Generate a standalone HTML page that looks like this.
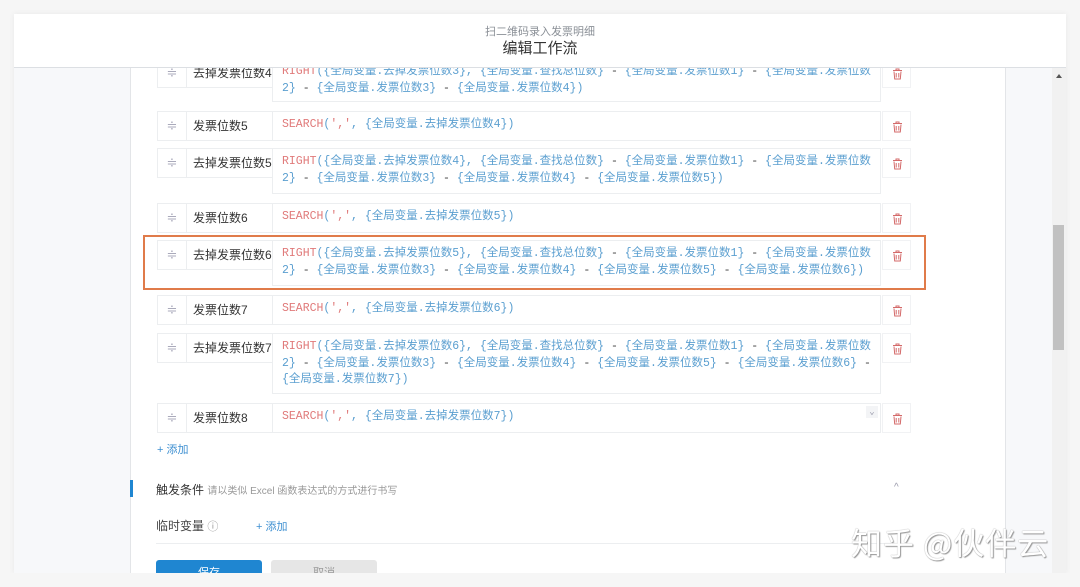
<!DOCTYPE html>
<html><head><meta charset="utf-8"><style>
*{box-sizing:border-box;margin:0;padding:0}
html,body{width:1080px;height:587px;overflow:hidden}
body{background:#f6f6f6;font-family:"Liberation Sans","Noto Sans CJK SC",sans-serif;position:relative}
.modal{position:absolute;left:14px;top:14px;width:1052px;height:559px;background:#f7f8fa;overflow:hidden;box-shadow:0 0 6px rgba(0,0,0,.06)}
.hdr{position:absolute;left:0;top:0;width:1052px;height:54px;background:#fff;border-bottom:1px solid #dcdfe3;text-align:center;z-index:3}
.hdr .s{font-size:11px;color:#8a8f96;margin-top:11px;line-height:14px}
.hdr .t{font-size:15px;color:#333;line-height:20px}
.card{position:absolute;left:116px;top:40px;width:876px;height:519px;background:#fff;border-left:1px solid #e3e5e8;border-right:1px solid #e3e5e8}
.sb{position:absolute;left:1038px;top:54px;width:14px;height:505px;background:#f1f1f1}
.thumb{position:absolute;left:1px;top:157px;width:11px;height:125px;background:#c1c1c1}
.arr{position:absolute;left:4px;top:6px;width:0;height:0;border-left:3px solid transparent;border-right:3px solid transparent;border-bottom:4px solid #555}
.row{position:absolute;left:143px}
.h{position:absolute;left:0;top:0;width:30px;height:30px;border:1px solid #eceef0;color:#aab;font-size:13px;text-align:center;line-height:28px}
.n{position:absolute;left:29px;top:0;width:87px;height:30px;border:1px solid #eceef0;border-left:none;font-size:12px;color:#333;line-height:28px;padding-left:7px;white-space:nowrap;overflow:hidden}
.f{position:absolute;left:115px;top:0;width:609px;border:1px solid #eceef0;font-family:"Liberation Mono","Noto Sans CJK SC",monospace;font-size:11.5px;line-height:16.5px;padding:5px 9px 6px;color:#5b9fd0;white-space:nowrap;overflow:hidden;min-height:30px}
.f b{font-weight:normal;color:#e07a7a}
.f i{font-style:normal;color:#444}
.d{position:absolute;left:725px;top:0;width:29px;height:30px;border:1px solid #f1f2f4}
.d svg{position:absolute;left:9px;top:9px}
.hl{position:absolute;left:129px;top:221px;width:783px;height:55px;border:2.5px solid #e07b4a;z-index:2}
</style></head><body>
<div class="modal">
<div class="hdr"><div class="s">扫二维码录入发票明细</div><div class="t">编辑工作流</div></div>
<div class="card"></div>
<div class="sb"><div class="arr"></div><div class="thumb"></div></div>

<div class="row" style="top:44px"><div class="h">≑</div><div class="n">去掉发票位数4</div><div class="f" style="height:44px"><b>RIGHT</b>({全局变量.去掉发票位数3}, {全局变量.查找总位数} <i>-</i> {全局变量.发票位数1} <i>-</i> {全局变量.发票位数<br>2} <i>-</i> {全局变量.发票位数3} <i>-</i> {全局变量.发票位数4})</div><div class="d"><svg width="11" height="12"><path d="M1 2.5h9M4 2.5V1h3v1.5M2 3.5l.7 7.5h5.6L9 3.5M4.2 5v4.5M6.8 5v4.5" stroke="#d46a6a" fill="none" stroke-width="1"/></svg></div></div>

<div class="row" style="top:97px"><div class="h">≑</div><div class="n">发票位数5</div><div class="f"><b>SEARCH</b>(<b>','</b>, {全局变量.去掉发票位数4})</div><div class="d"><svg width="11" height="12"><path d="M1 2.5h9M4 2.5V1h3v1.5M2 3.5l.7 7.5h5.6L9 3.5M4.2 5v4.5M6.8 5v4.5" stroke="#d46a6a" fill="none" stroke-width="1"/></svg></div></div>

<div class="row" style="top:134px"><div class="h">≑</div><div class="n">去掉发票位数5</div><div class="f" style="height:46px"><b>RIGHT</b>({全局变量.去掉发票位数4}, {全局变量.查找总位数} <i>-</i> {全局变量.发票位数1} <i>-</i> {全局变量.发票位数<br>2} <i>-</i> {全局变量.发票位数3} <i>-</i> {全局变量.发票位数4} <i>-</i> {全局变量.发票位数5})</div><div class="d"><svg width="11" height="12"><path d="M1 2.5h9M4 2.5V1h3v1.5M2 3.5l.7 7.5h5.6L9 3.5M4.2 5v4.5M6.8 5v4.5" stroke="#d46a6a" fill="none" stroke-width="1"/></svg></div></div>

<div class="row" style="top:189px"><div class="h">≑</div><div class="n">发票位数6</div><div class="f"><b>SEARCH</b>(<b>','</b>, {全局变量.去掉发票位数5})</div><div class="d"><svg width="11" height="12"><path d="M1 2.5h9M4 2.5V1h3v1.5M2 3.5l.7 7.5h5.6L9 3.5M4.2 5v4.5M6.8 5v4.5" stroke="#d46a6a" fill="none" stroke-width="1"/></svg></div></div>

<div class="row" style="top:226px"><div class="h">≑</div><div class="n">去掉发票位数6</div><div class="f" style="height:46px"><b>RIGHT</b>({全局变量.去掉发票位数5}, {全局变量.查找总位数} <i>-</i> {全局变量.发票位数1} <i>-</i> {全局变量.发票位数<br>2} <i>-</i> {全局变量.发票位数3} <i>-</i> {全局变量.发票位数4} <i>-</i> {全局变量.发票位数5} <i>-</i> {全局变量.发票位数6})</div><div class="d"><svg width="11" height="12"><path d="M1 2.5h9M4 2.5V1h3v1.5M2 3.5l.7 7.5h5.6L9 3.5M4.2 5v4.5M6.8 5v4.5" stroke="#d46a6a" fill="none" stroke-width="1"/></svg></div></div>
<div class="hl"></div>

<div class="row" style="top:281px"><div class="h">≑</div><div class="n">发票位数7</div><div class="f"><b>SEARCH</b>(<b>','</b>, {全局变量.去掉发票位数6})</div><div class="d"><svg width="11" height="12"><path d="M1 2.5h9M4 2.5V1h3v1.5M2 3.5l.7 7.5h5.6L9 3.5M4.2 5v4.5M6.8 5v4.5" stroke="#d46a6a" fill="none" stroke-width="1"/></svg></div></div>

<div class="row" style="top:319px"><div class="h">≑</div><div class="n">去掉发票位数7</div><div class="f" style="height:61px"><b>RIGHT</b>({全局变量.去掉发票位数6}, {全局变量.查找总位数} <i>-</i> {全局变量.发票位数1} <i>-</i> {全局变量.发票位数<br>2} <i>-</i> {全局变量.发票位数3} <i>-</i> {全局变量.发票位数4} <i>-</i> {全局变量.发票位数5} <i>-</i> {全局变量.发票位数6} <i>-</i><br>{全局变量.发票位数7})</div><div class="d"><svg width="11" height="12"><path d="M1 2.5h9M4 2.5V1h3v1.5M2 3.5l.7 7.5h5.6L9 3.5M4.2 5v4.5M6.8 5v4.5" stroke="#d46a6a" fill="none" stroke-width="1"/></svg></div></div>

<div class="row" style="top:389px"><div class="h">≑</div><div class="n">发票位数8</div><div class="f"><b>SEARCH</b>(<b>','</b>, {全局变量.去掉发票位数7})<span style="position:absolute;right:2px;top:2px;width:12px;height:12px;background:#f3f4f6;color:#99a;font-size:9px;line-height:12px;text-align:center">⌄</span></div><div class="d"><svg width="11" height="12"><path d="M1 2.5h9M4 2.5V1h3v1.5M2 3.5l.7 7.5h5.6L9 3.5M4.2 5v4.5M6.8 5v4.5" stroke="#d46a6a" fill="none" stroke-width="1"/></svg></div></div>

<div style="position:absolute;left:143px;top:427px;font-size:11px;color:#3d8fd1">+ 添加</div>
<div style="position:absolute;left:116px;top:466px;width:3px;height:17px;background:#1f86d1"></div>
<div style="position:absolute;left:142px;top:467px;font-size:12px;color:#333;white-space:nowrap">触发条件 <span style="font-size:10px;color:#999">请以类似 Excel 函数表达式的方式进行书写</span></div>
<div style="position:absolute;left:880px;top:468px;font-size:10px;color:#99a">^</div>
<div style="position:absolute;left:142px;top:503px;font-size:12px;color:#444">临时变量 <span style="color:#999;font-size:11px">ⓘ</span></div>
<div style="position:absolute;left:242px;top:504px;font-size:11px;color:#3d8fd1">+ 添加</div>
<div style="position:absolute;left:142px;top:529px;width:735px;height:1px;background:#eceef0"></div>
<div style="position:absolute;left:142px;top:546px;width:106px;height:13px;background:#1f86d1;border-radius:3px 3px 0 0;color:#fff;font-size:11px;text-align:center;line-height:26px;overflow:hidden">保存</div>
<div style="position:absolute;left:257px;top:546px;width:106px;height:13px;background:#e6e6e6;border-radius:3px 3px 0 0;color:#999;font-size:11px;text-align:center;line-height:26px;overflow:hidden">取消</div>
</div>
<div style="position:absolute;left:0;top:573px;width:1080px;height:14px;background:#f6f6f6"></div>
<div style="position:absolute;left:851px;top:522px;font-size:31px;line-height:40px;color:#fff;text-shadow:0 0 1px #888,1px 1px 1px #999;letter-spacing:1px;font-family:'Noto Sans CJK SC',sans-serif;white-space:nowrap">知乎 @伙伴云</div>
</body></html>
